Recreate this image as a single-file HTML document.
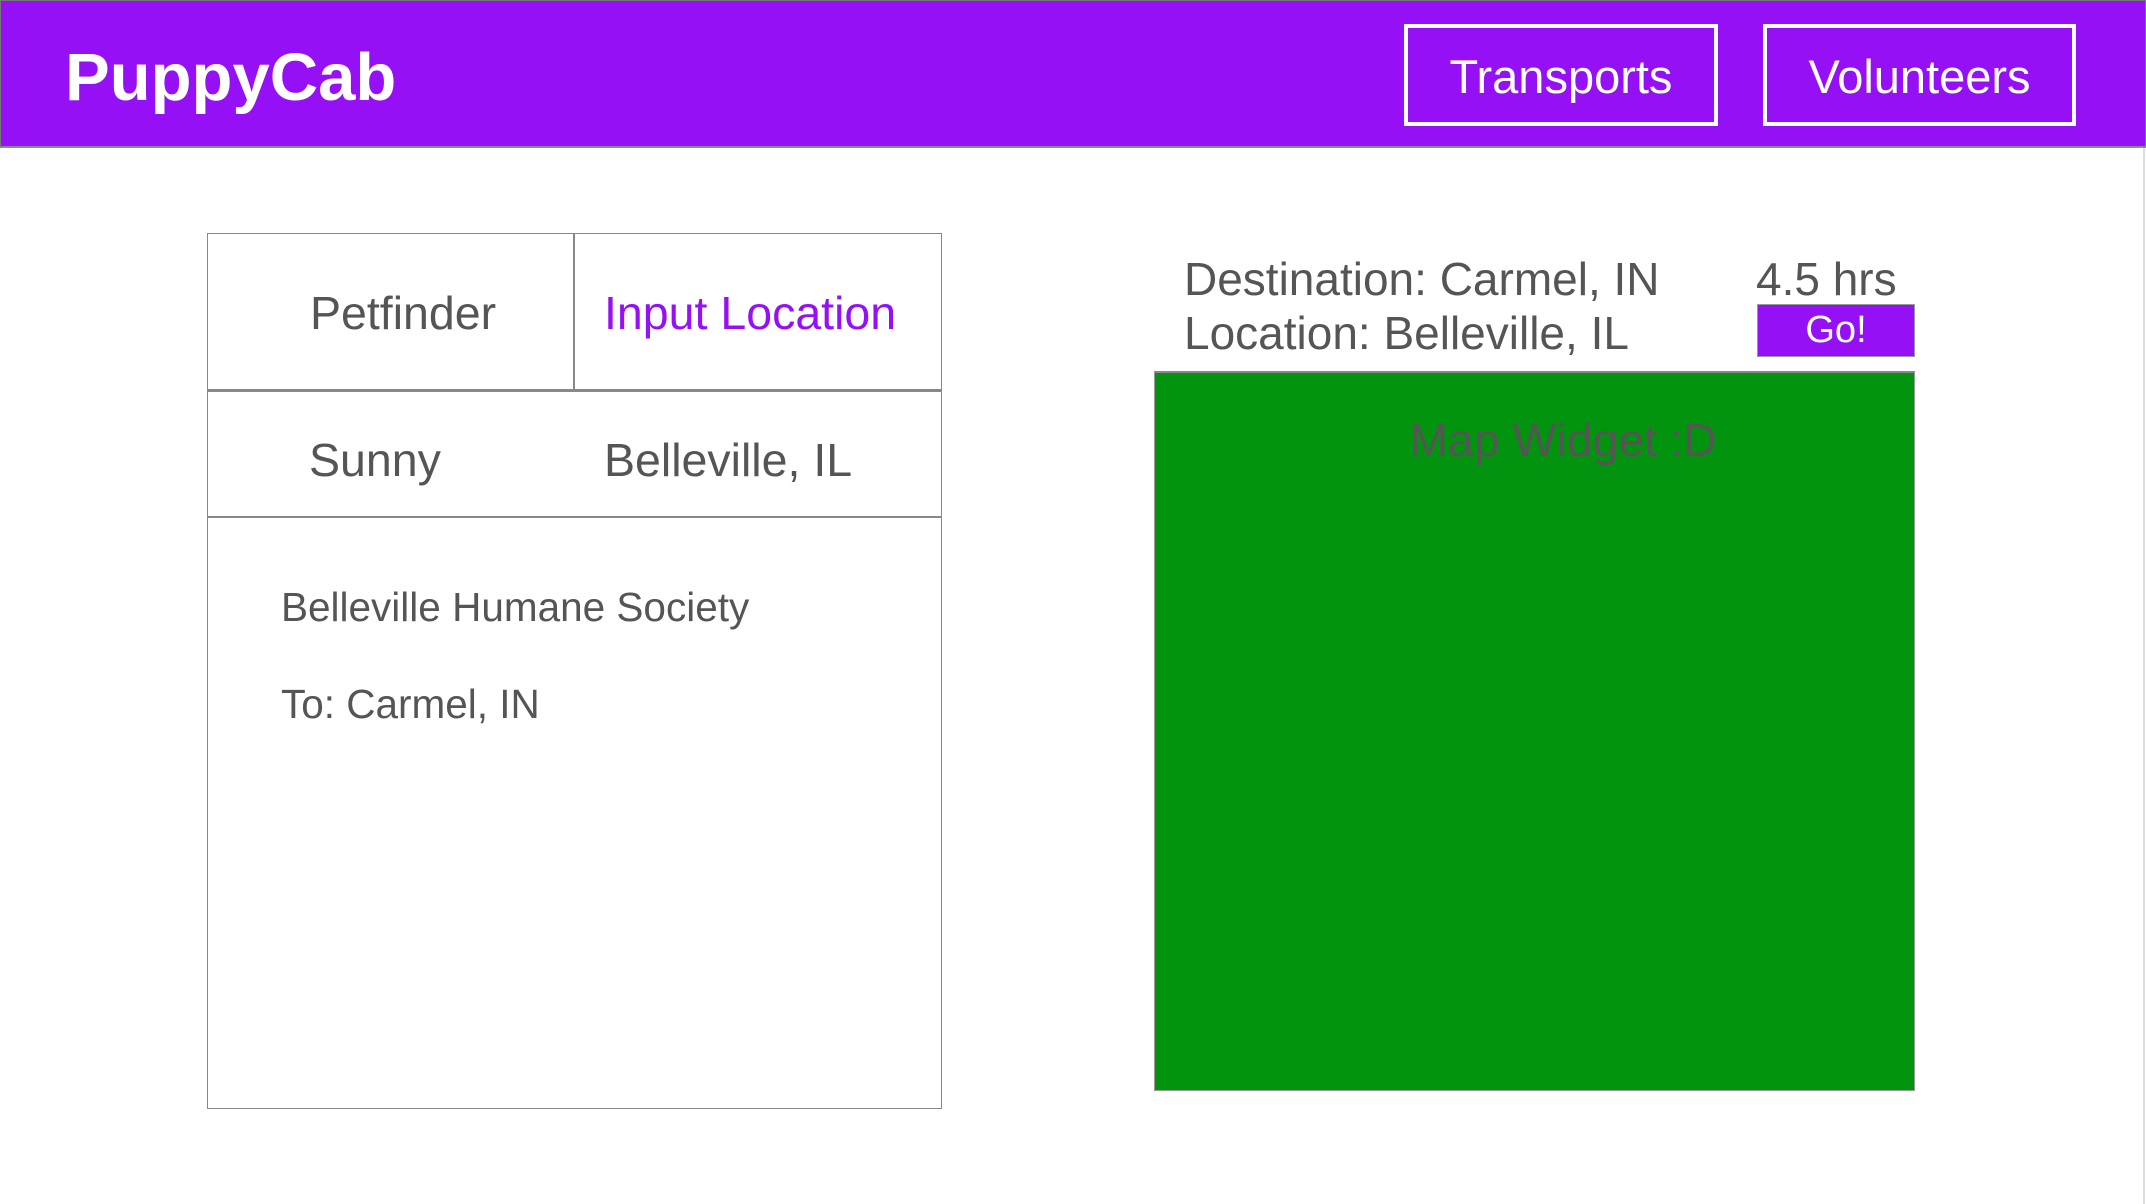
<!DOCTYPE html>
<html><head><meta charset="utf-8"><style>
*{margin:0;padding:0;box-sizing:border-box}
body{width:2146px;height:1204px;background:#fff;position:relative;overflow:hidden;font-family:"Liberation Sans",Arial,sans-serif;color:#555}
.a{position:absolute;white-space:nowrap;line-height:1}
#hdr{position:absolute;left:0;top:0;width:2146px;height:148px;background:#9510f5;border:1px solid #777;border-bottom:2px solid #8a8a8a}
.btn{position:absolute;top:24px;height:102px;border:4px solid #fff;color:#fff;font-size:47px;display:flex;align-items:center;justify-content:center;padding-top:2px}
.ln{position:absolute;background:#888}
</style></head><body>
<div id="hdr"></div>
<div class="a" style="left:65px;top:44px;font-size:67px;font-weight:bold;color:#fff">PuppyCab</div>
<div class="btn" style="left:1404px;width:314px">Transports</div>
<div class="btn" style="left:1763px;width:313px">Volunteers</div>
<div style="position:absolute;left:2143px;top:148px;width:2px;height:1056px;background:#ddd"></div>

<div style="position:absolute;left:207px;top:233px;width:735px;height:876px;border:1.5px solid #888"></div>
<div class="ln" style="left:573px;top:233px;width:1.5px;height:157px"></div>
<div class="ln" style="left:207px;top:389px;width:735px;height:2.5px"></div>
<div class="ln" style="left:207px;top:516px;width:735px;height:1.5px"></div>

<div class="a" style="left:310px;top:290px;font-size:46.5px">Petfinder</div>
<div class="a" style="left:604px;top:290px;font-size:46.5px;color:#9510f5">Input Location</div>
<div class="a" style="left:309px;top:437px;font-size:46.5px">Sunny</div>
<div class="a" style="left:604px;top:437px;font-size:46.5px">Belleville, IL</div>
<div class="a" style="left:281px;top:587px;font-size:40.5px">Belleville Humane Society</div>
<div class="a" style="left:281px;top:684px;font-size:40.5px">To: Carmel, IN</div>

<div class="a" style="left:1184px;top:256px;font-size:46px">Destination: Carmel, IN</div>
<div class="a" style="left:1184px;top:310px;font-size:46px">Location: Belleville, IL</div>
<div class="a" style="left:1756px;top:256px;font-size:46px">4.5 hrs</div>
<div style="position:absolute;left:1757px;top:304px;width:158px;height:53px;background:#9510f5;border:1px solid #999;color:#fff;font-size:38px;display:flex;align-items:center;justify-content:center">Go!</div>
<div style="position:absolute;left:1154px;top:371px;width:761px;height:720px;background:#03940f;border:1px solid #999;border-top:2px solid #888"></div>
<div class="a" style="left:1263px;width:600px;text-align:center;top:417px;font-size:46.5px;color:#555">Map Widget :D</div>
</body></html>
